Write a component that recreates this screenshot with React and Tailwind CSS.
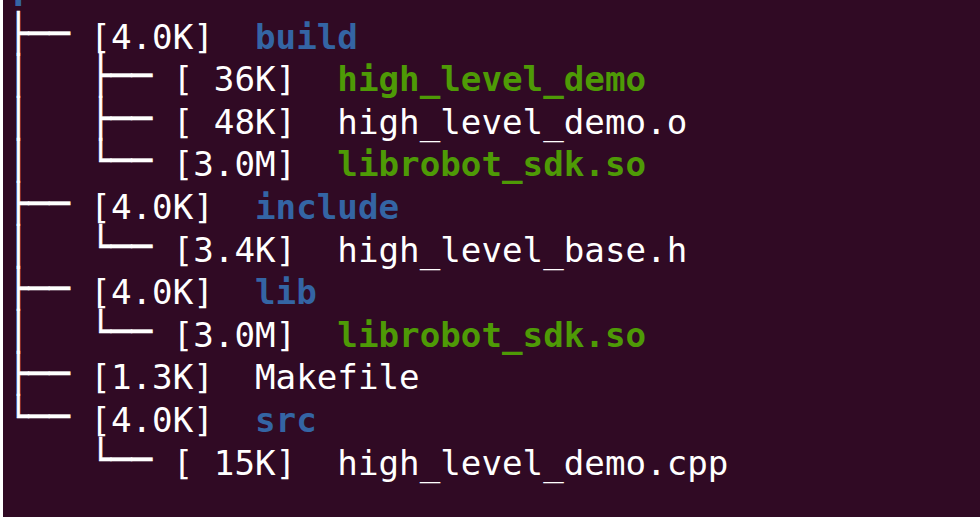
import React from 'react';

// tree output lines: [prefix, size, name, kind]
const rows = [
  ['├── ', '[4.0K]', 'build', 'dir'],
  ['│   ├── ', '[ 36K]', 'high_level_demo', 'exe'],
  ['│   ├── ', '[ 48K]', 'high_level_demo.o', 'file'],
  ['│   └── ', '[3.0M]', 'librobot_sdk.so', 'exe'],
  ['├── ', '[4.0K]', 'include', 'dir'],
  ['│   └── ', '[3.4K]', 'high_level_base.h', 'file'],
  ['├── ', '[4.0K]', 'lib', 'dir'],
  ['│   └── ', '[3.0M]', 'librobot_sdk.so', 'exe'],
  ['├── ', '[1.3K]', 'Makefile', 'file'],
  ['└── ', '[4.0K]', 'src', 'dir'],
  ['    └── ', '[ 15K]', 'high_level_demo.cpp', 'file'],
];

const nameClass = {
  dir: 'font-bold text-[#3465a4]',
  exe: 'font-bold text-[#4e9a06]',
  file: 'text-white',
};

export default function App() {
  return (
    <div className="w-full h-screen bg-white flex flex-col pb-[2px] pl-[3px]">
      <div className="flex-1 bg-[#300a24] overflow-hidden pl-[5px]">
        <div className="mt-[-27px] font-['DejaVu_Sans_Mono',monospace] text-[34.2px] leading-[42.6px] text-white whitespace-pre">
          <div className="font-bold text-[#3465a4]">.</div>
          {rows.map(([prefix, size, name, kind], i) => (
            <div key={i}>
              {/* box-drawing chars stretched a bit so the lines join up like the terminal's */}
              <span className="inline-block scale-y-[1.1] -translate-y-[4px] [-webkit-text-stroke:0.5px_white]">{prefix}</span>
              {size}{'  '}<span className={nameClass[kind]}>{name}</span>
            </div>
          ))}
        </div>
      </div>
    </div>
  );
}
